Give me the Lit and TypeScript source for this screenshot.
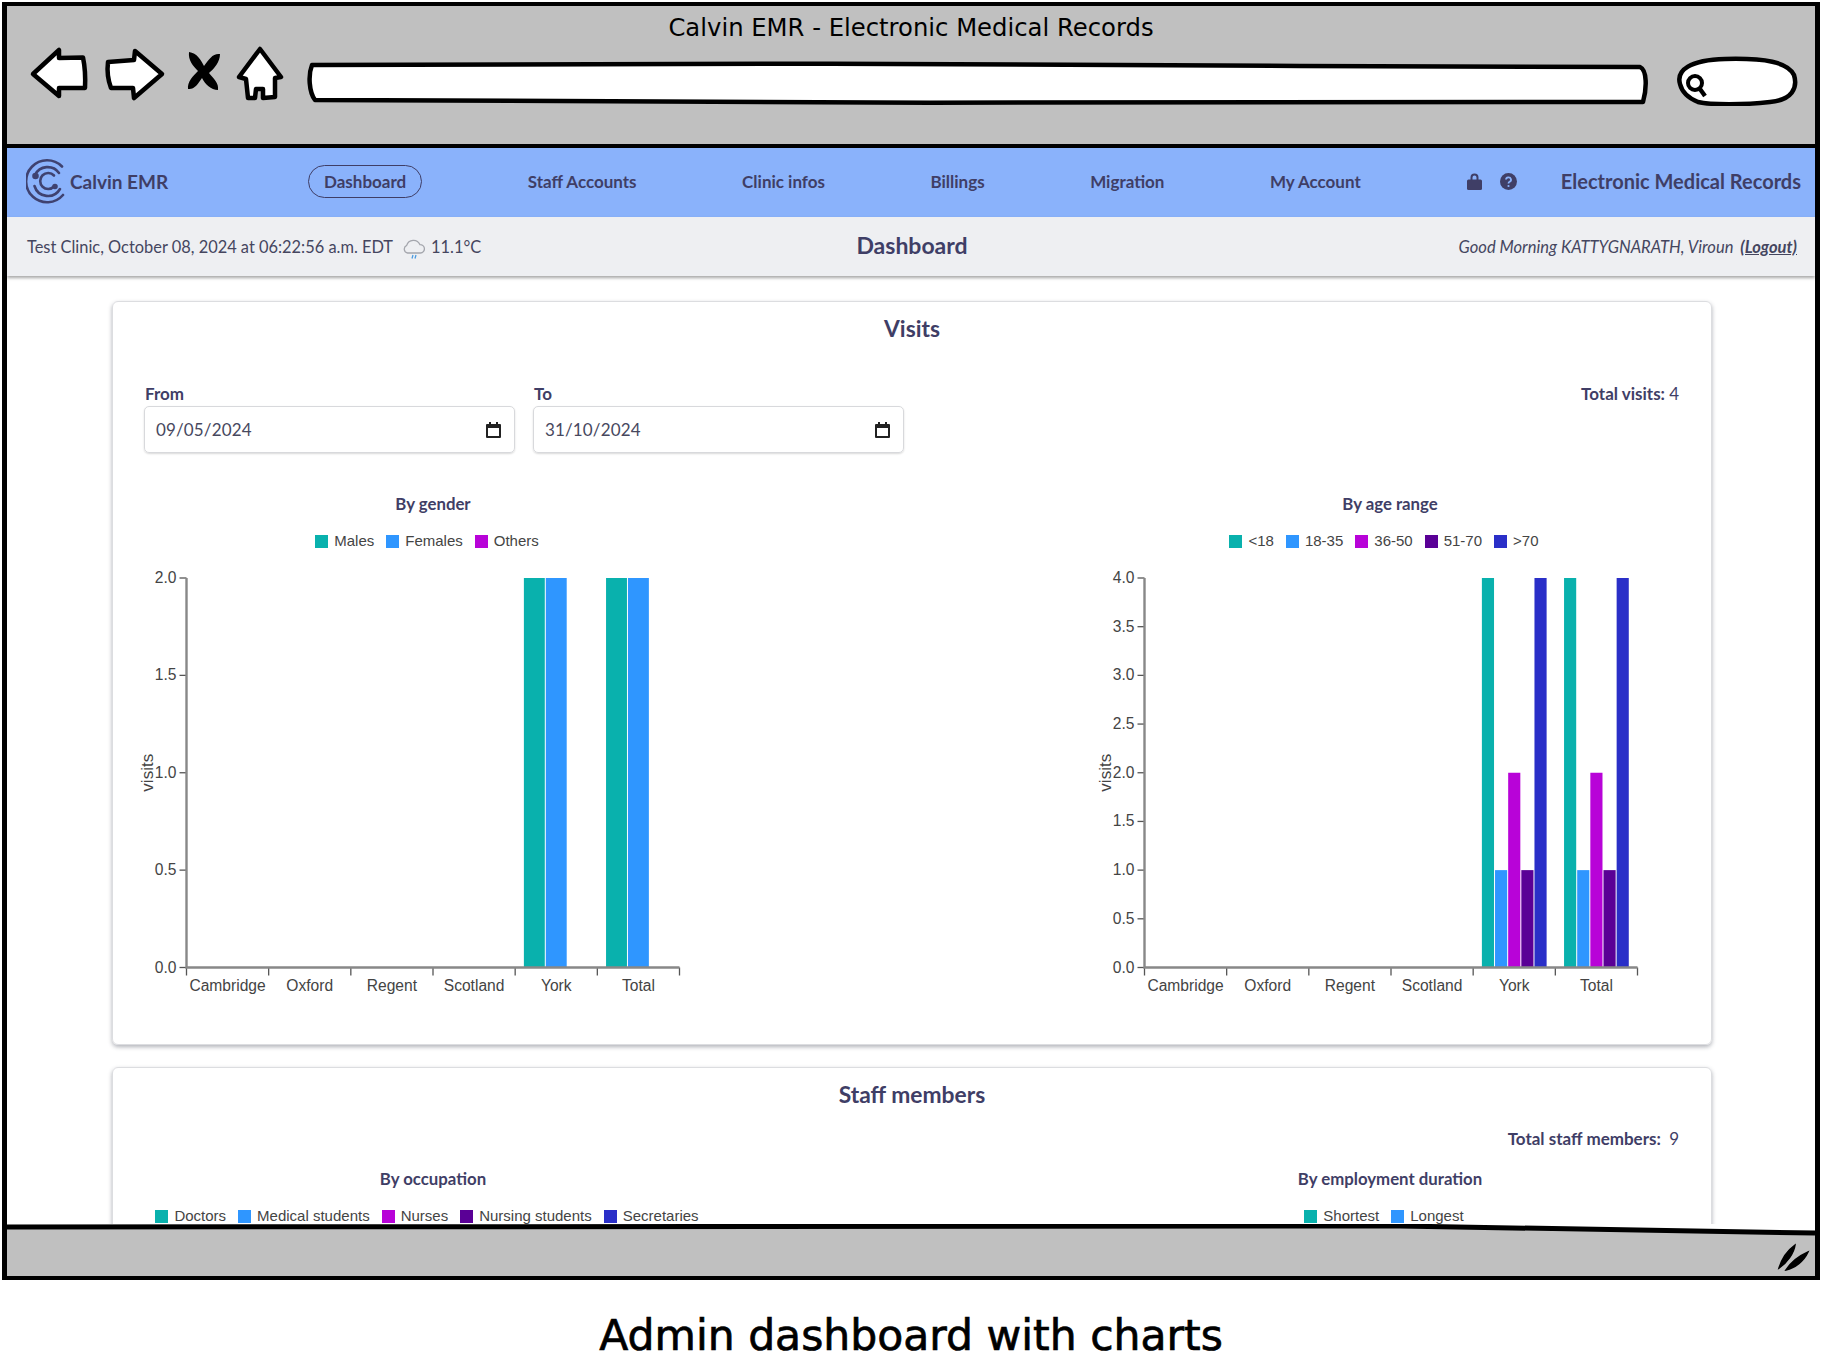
import { LitElement, html, css, svg } from "lit";
import { customElement, property } from "lit/decorators.js";

const TEAL = "#09b1ad";
const BLUE = "#2f96ff";
const PURPLE = "#b803d8";
const VIOLET = "#5a0096";
const NAVY = "#2a2fc8";

const CLINICS = ["Cambridge", "Oxford", "Regent", "Scotland", "York", "Total"];

interface Series {
  name: string;
  color: string;
  values?: number[];
}

/** Grouped bar chart, drawn the way recharts lays out its plot. */
@customElement("bar-chart")
export class BarChart extends LitElement {
  @property({ type: Array }) series: Series[] = [];
  @property({ type: Number }) max = 2;
  @property({ type: Number }) step = 0.5;

  static styles = css`
    :host {
      display: block;
    }
    svg {
      display: block;
      overflow: visible;
    }
    text {
      font-family: "Liberation Sans", Arial, sans-serif;
      font-size: 15.6px;
      fill: #444;
    }
    .ylabel {
      font-size: 17px;
    }
  `;

  render() {
    const left = 42.5;
    const top = 27;
    const plotW = 493;
    const plotH = 389.5;
    const band = plotW / CLINICS.length;
    const inner = band * 0.8;
    const barW = inner / this.series.length;

    const ticks: number[] = [];
    for (let v = 0; v <= this.max + 0.001; v += this.step) ticks.push(v);

    return html`<svg width="576" height="448" viewBox="0 0 576 448">
      ${this.series.map((s, si) =>
        (s.values ?? []).map((v, ci) => {
          if (!v) return null;
          const h = (v / this.max) * plotH;
          const x = left + band * ci + band * 0.1 + barW * si;
          return svg`<rect x=${x + 0.5} y=${top + plotH - h} width=${barW - 1} height=${h} fill=${s.color}></rect>`;
        })
      )}
      ${ticks.map((v) => {
        const y = top + plotH - (v / this.max) * plotH;
        return svg`<path d="M${left - 7} ${y}H${left}" stroke="#555" stroke-width="1.3"></path>
          <text x=${left - 10} y=${y + 5} text-anchor="end">${v.toFixed(1)}</text>`;
      })}
      ${CLINICS.map((c, i) => {
        const x = left + band * i;
        return svg`<path d="M${x} ${top + plotH}v8" stroke="#555" stroke-width="1.3"></path>
          <text x=${x + band / 2} y=${top + plotH + 23} text-anchor="middle">${c}</text>`;
      })}
      <path d="M${left + plotW} ${top + plotH}v8" stroke="#555" stroke-width="1.3"></path>
      <path d="M${left} ${top}V${top + plotH}H${left + plotW}" fill="none" stroke="#888" stroke-width="2.4"></path>
      <text class="ylabel" transform="translate(${9} ${top + plotH / 2}) rotate(-90)" text-anchor="middle">visits</text>
    </svg>`;
  }
}

@customElement("chart-legend")
export class ChartLegend extends LitElement {
  @property({ type: Array }) series: Series[] = [];

  static styles = css`
    :host {
      display: flex;
      justify-content: center;
      font-family: "Liberation Sans", Arial, sans-serif;
      font-size: 15px;
      line-height: 20px;
      color: #444;
    }
    .item {
      display: flex;
      align-items: center;
      gap: 6px;
      margin-right: 12px;
    }
    .swatch {
      width: 13px;
      height: 13px;
    }
  `;

  render() {
    return this.series.map(
      (s) => html`<div class="item">
        <span class="swatch" style="background:${s.color}"></span>${s.name}
      </div>`
    );
  }
}

const GENDER: Series[] = [
  { name: "Males", color: TEAL, values: [0, 0, 0, 0, 2, 2] },
  { name: "Females", color: BLUE, values: [0, 0, 0, 0, 2, 2] },
  { name: "Others", color: PURPLE, values: [0, 0, 0, 0, 0, 0] },
];

const AGE: Series[] = [
  { name: "<18", color: TEAL, values: [0, 0, 0, 0, 4, 4] },
  { name: "18-35", color: BLUE, values: [0, 0, 0, 0, 1, 1] },
  { name: "36-50", color: PURPLE, values: [0, 0, 0, 0, 2, 2] },
  { name: "51-70", color: VIOLET, values: [0, 0, 0, 0, 1, 1] },
  { name: ">70", color: NAVY, values: [0, 0, 0, 0, 4, 4] },
];

const OCCUPATION: Series[] = [
  { name: "Doctors", color: TEAL },
  { name: "Medical students", color: BLUE },
  { name: "Nurses", color: PURPLE },
  { name: "Nursing students", color: VIOLET },
  { name: "Secretaries", color: NAVY },
];

const DURATION: Series[] = [
  { name: "Shortest", color: TEAL },
  { name: "Longest", color: BLUE },
];

const NAV = ["Staff Accounts", "Clinic infos", "Billings", "Migration", "My Account"];

const calendarIcon = html`<svg class="cal" width="15" height="16" viewBox="0 0 15 16">
  <path d="M3 0h2v2h5V0h2v2h2a1 1 0 0 1 1 1v12a1 1 0 0 1-1 1H1a1 1 0 0 1-1-1V3a1 1 0 0 1 1-1h2zM2 6v8h11V6z" fill="#222"></path>
</svg>`;

@customElement("app-root")
export class AppRoot extends LitElement {
  static styles = css`
    :host {
      display: block;
      width: 1822px;
      height: 1370px;
      background: #fff;
      font-family: Lato, "Open Sans", sans-serif;
      color: #3f3e66;
      overflow: hidden;
    }
    .frame {
      box-sizing: border-box;
      width: 1818px;
      height: 1278px;
      margin: 2px 0 0 2px;
      border: solid #000;
      border-width: 4px 5px;
      display: flex;
      flex-direction: column;
    }
    .chrome {
      flex: none;
      height: 142px;
      box-sizing: border-box;
      background: #c0c0c0;
      border-bottom: 4px solid #000;
    }
    .window-title {
      height: 38px;
      text-align: center;
      font-family: "DejaVu Sans", sans-serif;
      font-size: 24.3px;
      line-height: 44px;
      color: #000;
    }
    .toolbar {
      display: block;
    }
    .nav {
      flex: none;
      height: 69px;
      box-sizing: border-box;
      background: #8ab2fb;
      display: flex;
      align-items: center;
      padding: 0 14px 3px 19px;
      font-weight: 700;
      font-size: 17px;
    }
    .brand {
      display: flex;
      align-items: center;
      gap: 2px;
      width: 282px;
      font-size: 19px;
    }
    .links {
      display: flex;
      align-items: center;
      gap: 105.5px;
    }
    .pill {
      border: 1.5px solid #3f3e66;
      border-radius: 17px;
      padding: 0 15px;
      line-height: 31px;
    }
    .tools {
      display: flex;
      align-items: center;
      gap: 17px;
      margin-left: 105px;
    }
    .product {
      margin-left: auto;
      font-size: 20px;
    }
    .subbar {
      flex: none;
      height: 59px;
      box-sizing: border-box;
      background: #eeeff2;
      box-shadow: 0 2px 3px rgba(0, 0, 0, 0.35);
      position: relative;
      display: grid;
      grid-template-columns: 1fr auto 1fr;
      align-items: center;
      padding: 0 18px 0 20px;
      font-size: 16.4px;
      color: #45465f;
    }
    .where {
      display: flex;
      align-items: center;
    }
    .where svg {
      margin: 3px 6px 0 10px;
    }
    .subbar h1 {
      margin: 0 0 3px;
      font-size: 23px;
      font-weight: 700;
      color: #3f3e66;
    }
    .hello {
      text-align: right;
      font-style: italic;
      font-size: 16.55px;
    }
    .hello a {
      font-weight: 700;
      color: inherit;
      margin-left: 3px;
    }
    main {
      flex: 1;
      min-height: 0;
      overflow: hidden;
      padding: 25px 103px 0 105px;
    }
    .card {
      box-sizing: border-box;
      border: 1px solid #dcdde0;
      border-radius: 6px;
      box-shadow: 0 2px 4px rgba(60, 65, 80, 0.4);
      padding: 12px 32px 45px 32px;
      margin-bottom: 22px;
    }
    .card h2 {
      margin: 0;
      text-align: center;
      font-size: 22.8px;
      line-height: 28px;
      font-weight: 700;
    }
    .filters {
      display: flex;
      align-items: flex-start;
      gap: 18px;
      margin: 42px 0 0 -1px;
    }
    .field label {
      display: block;
      font-weight: 700;
      font-size: 17px;
      line-height: 20px;
      margin-bottom: 2px;
      padding-left: 1px;
    }
    .date {
      box-sizing: border-box;
      width: 371px;
      height: 47px;
      display: flex;
      align-items: center;
      justify-content: space-between;
      padding: 0 13px 0 11px;
      border: 1px solid #d8d9dc;
      border-radius: 5px;
      box-shadow: 0 1px 2px rgba(0, 0, 0, 0.15);
      font-size: 17px;
      letter-spacing: 0.15px;
      color: #47485e;
    }
    .total {
      margin-left: auto;
      font-size: 17px;
      line-height: 20px;
      font-weight: 700;
    }
    .total span {
      font-weight: 400;
    }
    .total.staff {
      text-align: right;
      margin-top: 21px;
    }
    .charts {
      display: flex;
      justify-content: space-between;
      margin: 39px 1px 0 0;
    }
    .charts.tight {
      margin-top: 18px;
    }
    .chart {
      width: 576px;
    }
    .chart:first-child bar-chart {
      margin-left: -1px;
    }
    .chart h3 {
      margin: 0 0 15px;
      text-align: center;
      font-size: 16.8px;
      line-height: 24px;
      font-weight: 700;
    }
    .status {
      flex: 1;
      min-height: 52px;
      max-height: 52px;
      position: relative;
    }
    .status svg {
      position: absolute;
      left: 0;
      top: 0;
    }
    .caption {
      margin-top: 26px;
      text-align: center;
      font-family: "DejaVu Sans", sans-serif;
      font-size: 42.5px;
      line-height: 60px;
      color: #000;
      -webkit-text-stroke: 0.7px #000;
    }
  `;

  render() {
    return html`
      <div class="frame">
        <header class="chrome">
          <div class="window-title">Calvin EMR - Electronic Medical Records</div>
          ${this.renderToolbar()}
        </header>
        <nav class="nav">
          <div class="brand">
            <svg width="42" height="46" viewBox="0 0 42 46" fill="none" stroke="#3f4270" stroke-width="2.6" stroke-linecap="round">
              <path d="M36 8.5A21 21 0 1 0 37 37"></path>
              <path d="M9 17A14 14 0 0 1 33 15M8.5 28A14 14 0 0 0 34 31"></path>
              <path d="M28 17.5A8 8 0 1 0 28 28.5"></path>
              <circle cx="9.5" cy="18" r="2" fill="#3f4270"></circle>
              <circle cx="29" cy="28.5" r="1.5" fill="#3f4270"></circle>
            </svg>
            Calvin EMR
          </div>
          <div class="links">
            <span class="pill">Dashboard</span>
            ${NAV.map((n) => html`<span>${n}</span>`)}
          </div>
          <div class="tools">
            <svg width="17" height="18" viewBox="0 0 17 18" fill="#3f3e66">
              <path d="M4.5 8V5.5a4 4 0 0 1 8 0V8h-2V5.5a2 2 0 0 0-4 0V8z"></path>
              <rect x="1" y="7.5" width="15" height="10.5" rx="1.5"></rect>
            </svg>
            <svg width="17" height="17" viewBox="0 0 17 17">
              <circle cx="8.5" cy="8.5" r="8.5" fill="#3f3e66"></circle>
              <path d="M6 6.6a2.5 2.3 0 1 1 3.6 2.1c-.8.4-1.1.8-1.1 1.7" fill="none" stroke="#8ab2fb" stroke-width="1.8"></path>
              <circle cx="8.5" cy="13" r="1.1" fill="#8ab2fb"></circle>
            </svg>
          </div>
          <div class="product">Electronic Medical Records</div>
        </nav>
        <div class="subbar">
          <div class="where">
            Test Clinic, October 08, 2024 at 06:22:56 a.m. EDT
            <svg width="22" height="22" viewBox="0 0 22 22" fill="none">
              <path d="M4.5 16a4 4 0 0 1-.8-7.6 7 7 0 0 1 13.2-.8 4.2 4.2 0 0 1 .6 8.4z" stroke="#a4a6ad" stroke-width="1.3"></path>
              <path d="M10 18l-1 3.5M13 18l-1 3.5" stroke="#4b9be0" stroke-width="1.3"></path>
            </svg>
            11.1°C
          </div>
          <h1>Dashboard</h1>
          <div class="hello">Good Morning KATTYGNARATH, Viroun <a href="#">(Logout)</a></div>
        </div>
        <main>
          <section class="card">
            <h2>Visits</h2>
            <div class="filters">
              <div class="field">
                <label>From</label>
                <div class="date">09/05/2024 ${calendarIcon}</div>
              </div>
              <div class="field">
                <label>To</label>
                <div class="date">31/10/2024 ${calendarIcon}</div>
              </div>
              <div class="total">Total visits: <span>4</span></div>
            </div>
            <div class="charts">
              <div class="chart">
                <h3>By gender</h3>
                <chart-legend .series=${GENDER}></chart-legend>
                <bar-chart .series=${GENDER} .max=${2} .step=${0.5}></bar-chart>
              </div>
              <div class="chart">
                <h3>By age range</h3>
                <chart-legend .series=${AGE}></chart-legend>
                <bar-chart .series=${AGE} .max=${4} .step=${0.5}></bar-chart>
              </div>
            </div>
          </section>
          <section class="card">
            <h2>Staff members</h2>
            <div class="total staff">Total staff members:&nbsp; <span>9</span></div>
            <div class="charts tight">
              <div class="chart">
                <h3>By occupation</h3>
                <chart-legend .series=${OCCUPATION}></chart-legend>
              </div>
              <div class="chart">
                <h3>By employment duration</h3>
                <chart-legend .series=${DURATION}></chart-legend>
              </div>
            </div>
          </section>
        </main>
        <footer class="status">
          <svg width="1808" height="52" viewBox="7 1224 1808 52">
            <path d="M7 1227L1400 1226L1815 1233V1276H7Z" fill="#c0c0c0"></path>
            <path d="M7 1227L1400 1226L1815 1233" fill="none" stroke="#000" stroke-width="5"></path>
            <path d="M1779 1268C1782 1258 1788 1250 1795 1245C1794 1253 1787 1263 1779 1268Z" fill="#000" stroke="#000" stroke-width="1.5"></path>
            <path d="M1786 1270C1791 1262 1799 1256 1808 1252C1804 1261 1795 1268 1786 1270Z" fill="#000" stroke="#000" stroke-width="1.5"></path>
            <path d="M1815 1216V1224H1809Z" fill="#333"></path>
          </svg>
        </footer>
      </div>
      <div class="caption">Admin dashboard with charts</div>
    `;
  }

  // wobbly hand-drawn controls of the browser mock
  private renderToolbar() {
    return html`<svg class="toolbar" width="1808" height="62" viewBox="7 44 1808 62">
      <g fill="#fff" stroke="#000" stroke-width="4.5" stroke-linejoin="round">
        <path d="M33 74L59 50V58L83 57.5C85 67 85.5 78 85 88L59 88L59 96Z"></path>
        <path d="M108 62L134 60L135 51L162 74L134 98L133 88L111 88C108 80 107 70 108 62Z"></path>
        <path d="M260 49L281 77L275 78L275 97L263 98L263 89L256 89L255 98L248 98L246 79L239 77Z"></path>
        <path d="M312 65C600 63 1000 63 1300 66L1640 67C1647 70 1647 88 1643 102C1300 105 700 102 315 100C309 92 308 75 312 65Z"></path>
        <path d="M1680 84C1676 70 1690 60 1725 59C1765 58 1788 62 1794 75C1798 88 1792 100 1770 102C1745 105 1710 105 1698 102C1688 98 1682 92 1680 84Z"></path>
      </g>
      <path d="M189 52C197 53 201 60 204 66C209 59 213 53 220 54C220 62 214 69 209 73C214 79 219 83 218 90C211 90 205 84 202 78C198 84 194 90 188 89C187 82 193 76 198 71C193 66 188 60 189 52Z" fill="#000"></path>
      <circle cx="1695" cy="83" r="7" fill="none" stroke="#000" stroke-width="4"></circle>
      <path d="M1700 89L1705 96" stroke="#000" stroke-width="4.4"></path>
    </svg>`;
  }
}
